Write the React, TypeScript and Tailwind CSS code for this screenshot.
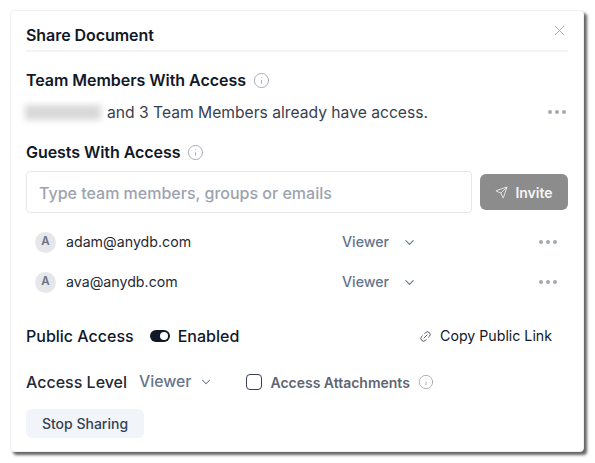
import React from "react";
import { X, Info, Send, ChevronDown, Link2 } from "lucide-react";

function Dots({ className = "" }: { className?: string }) {
  return (
    <span className={"flex items-center gap-[3px] " + className}>
      <span className="w-[4px] h-[4px] rounded-full bg-[#a3a8b0]" />
      <span className="w-[4px] h-[4px] rounded-full bg-[#a3a8b0]" />
      <span className="w-[4px] h-[4px] rounded-full bg-[#a3a8b0]" />
    </span>
  );
}

function Guest({ email }: { email: string }) {
  return (
    <div className="flex items-center h-[40px] pl-[9px] pr-[11px]">
      <span className="w-[21px] h-[21px] rounded-full bg-[#e5e7eb] flex items-center justify-center text-[11.5px] font-semibold text-[#6b7280]">A</span>
      <span className="ml-[10px] w-[276px] text-[14.2px] text-[#1f2937]">{email}</span>
      <span className="text-[14.2px] text-[#64748b] font-medium">Viewer</span>
      <ChevronDown className="ml-[13px] w-[15px] h-[15px] text-[#64748b]" strokeWidth={1.75} />
      <Dots className="ml-auto" />
    </div>
  );
}

export default function App() {
  return (
    <div className="w-[595px] h-[463px] bg-white pt-[10px] pl-[10px] overflow-hidden font-['Inter',sans-serif]">
      <div className="w-[574px] h-[442px] bg-white rounded-[4px] border border-[#f0f0f0] shadow-[3px_3px_3px_rgba(60,60,60,0.8)] px-[15px] relative">
        <X className="absolute right-[15px] top-[11px] w-[17px] h-[17px] text-[#9ca3af]" strokeWidth={1.25} />
        <div className="h-[41px] pt-[14px] border-b-2 border-[#f1f3f5] text-[16px] leading-[20px] font-semibold tracking-[-0.06px] text-[#111827]">Share Document</div>

        <div className="mt-[18px] flex items-center h-[20px] text-[16px] font-semibold tracking-[-0.04px] text-[#111827]">
          Team Members With Access
          <Info className="ml-[7px] w-[17px] h-[17px] text-[#9ca3af]" strokeWidth={1.25} />
        </div>
        <div className="mt-[12px] pt-[1px] flex items-center h-[20px]">
          <span className="w-[76px] h-[15px] -ml-[1px] bg-[#d8d8d8] blur-[3px]" />
          <span className="ml-[6px] text-[15.65px] text-[#374151]">and 3 Team Members already have access.</span>
          <Dots className="ml-auto mr-[2px] -translate-y-[1px]" />
        </div>

        <div className="mt-[20px] flex items-center h-[20px] text-[16px] font-semibold tracking-[-0.06px] text-[#111827]">
          Guests With Access
          <Info className="ml-[7px] w-[17px] h-[17px] text-[#9ca3af]" strokeWidth={1.25} />
        </div>
        <div className="mt-[9px] flex items-center justify-between">
          <div className="w-[446px] h-[42px] rounded-[4px] border border-[#e5e7eb] pl-[12px] pt-[1px] flex items-center text-[16px] font-medium text-[#9ca3af]">Type team members, groups or emails</div>
          <div className="w-[88px] h-[36px] rounded-[6px] bg-[#8c8c8c] flex items-center justify-center gap-[7px] text-[14px] font-semibold text-[#f3f4f6]">
            <Send className="w-[13px] h-[13px]" strokeWidth={1.5} />
            Invite
          </div>
        </div>

        <div className="mt-[9px]">
          <Guest email="adam@anydb.com" />
          <Guest email="ava@anydb.com" />
        </div>

        <div className="mt-[22px] flex items-center h-[24px]">
          <span className="text-[16px] font-medium text-[#111827]">Public Access</span>
          <span className="ml-[16px] w-[20px] h-[12px] rounded-full bg-[#111827] flex items-center justify-end pr-[2px]">
            <span className="w-[8px] h-[8px] rounded-full bg-white" />
          </span>
          <span className="ml-[8px] text-[16px] font-medium tracking-[0.02px] text-[#111827]">Enabled</span>
          <Link2 className="ml-auto w-[13px] h-[13px] text-[#374151] -rotate-45" strokeWidth={1.5} />
          <span className="ml-[8px] mr-[16px] text-[14.2px] text-[#111827]">Copy Public Link</span>
        </div>

        <div className="mt-[22px] flex items-center h-[24px]">
          <span className="text-[16px] font-medium text-[#1f2937]">Access Level</span>
          <span className="ml-[12px] text-[15.8px] font-medium text-[#64748b]">Viewer</span>
          <ChevronDown className="ml-[8px] w-[14px] h-[14px] text-[#64748b]" strokeWidth={1.75} />
          <span className="ml-[33px] w-[16px] h-[16px] rounded-[4px] border border-[#374151]" />
          <span className="ml-[8px] text-[14px] font-semibold tracking-[-0.01px] text-[#5f6673]">Access Attachments</span>
          <Info className="ml-[8px] w-[16px] h-[16px] text-[#9ca3af]" strokeWidth={1.25} />
        </div>

        <div className="mt-[15px] w-[118px] h-[29px] rounded-[6px] bg-[#f1f5f9] flex items-center justify-center text-[14px] font-medium text-[#374151]">Stop Sharing</div>
      </div>
    </div>
  );
}
